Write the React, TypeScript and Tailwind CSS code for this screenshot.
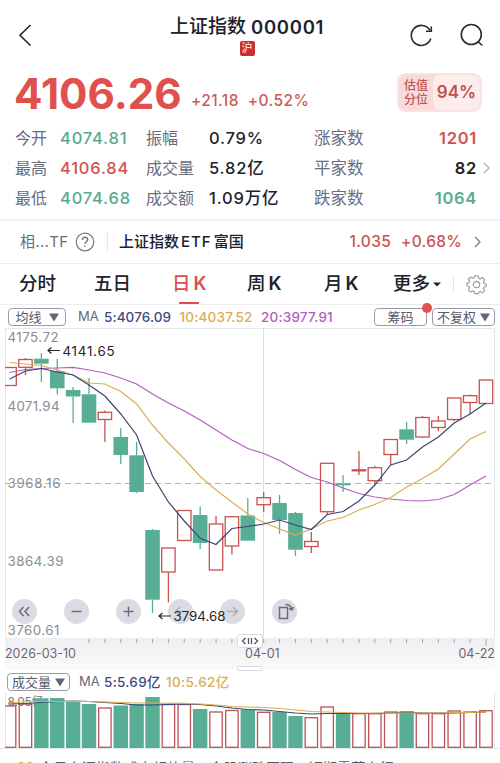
import React from "react";

const RED = "#c9514f";
const GREEN = "#57ae95";
const NAVY = "#3b4573";
const GOLD = "#dbad52";
const PURPLE = "#b45cbf";

type Candle = [up: 0 | 1, top: number, bottom: number, high: number, low: number, vol: number];

const candles: Candle[] = [
  [1, 367.5, 385.5, 367.5, 385.5, 706],
  [1, 359.5, 367.3, 358, 375, 704],
  [0, 358.7, 363.7, 353, 382, 698.3],
  [0, 371, 388.3, 359, 394.5, 698],
  [0, 390, 396.5, 387, 423, 702],
  [0, 394.3, 422.7, 378, 422.7, 704],
  [1, 412.3, 419.5, 410.5, 442, 708],
  [0, 437, 455, 428, 464, 705.5],
  [0, 455.3, 492, 442, 493, 704],
  [0, 530, 599.7, 529, 613, 697],
  [1, 548, 572, 548, 602.5, 704.5],
  [1, 510.5, 540.5, 510, 541, 704.5],
  [0, 515, 543, 506.5, 549, 709],
  [1, 524, 570, 516, 570, 712],
  [1, 516.7, 546, 516, 554.5, 710.5],
  [0, 515.5, 540.7, 498, 540.7, 709.5],
  [1, 497.7, 504.7, 492, 512, 712.3],
  [0, 503, 520, 495, 534, 712],
  [0, 513, 549.7, 512, 556, 716],
  [1, 541.5, 546.5, 532, 553, 717.7],
  [1, 463.3, 511.7, 463, 514, 707],
  [0, 483.3, 485.3, 475, 492, 713],
  [1, 469.8, 470.8, 451, 475, 713.7],
  [1, 467.7, 480.7, 466, 485, 713.7],
  [1, 439.5, 454.5, 439, 465, 712],
  [0, 429.3, 439.7, 422, 444, 711],
  [1, 417.5, 437, 416, 438, 713.7],
  [1, 421, 427.5, 416, 431, 713.7],
  [1, 398, 419.5, 398, 421, 711],
  [1, 395.7, 402.5, 394.5, 414, 712],
  [1, 380, 403.5, 380, 403.5, 710.7],
];

const ma5 = [379, 371, 368.5, 372, 375, 385, 396, 414, 435, 476, 502, 521, 538.3, 544.5, 528.5, 526.5, 524, 520, 525, 529.5, 514.5, 511.5, 501, 485, 465, 460, 447, 437, 423, 414, 403];
const ma10 = [362.5, 364, 365.5, 370, 375, 383, 384, 391.5, 404, 425, 443, 459, 476.5, 490, 502, 514, 522.5, 529, 535, 529, 521, 517.5, 510, 504.5, 497.5, 487, 478.5, 469, 454, 439, 431.5];
const ma20 = [372.5, 369.5, 368.5, 368, 367.3, 370, 373, 378, 384, 394, 403, 411, 420, 430, 440, 448.5, 453.5, 460.5, 469.5, 477.5, 482, 488, 493.5, 497, 499, 500.5, 501, 499.5, 494.5, 485, 476];
const vol5 = [704, 703.5, 702.5, 701.5, 701, 701.5, 702.5, 703.5, 705, 705, 704.5, 704, 704.5, 706, 708, 709.5, 710, 711.5, 713, 714, 713.5, 713.5, 713.5, 713.5, 713, 712.5, 713, 713, 713, 712.5, 712];
const vol10 = [702.5, 702, 701.5, 701.5, 701.3, 701.5, 702, 702.5, 703, 703, 703.3, 703.3, 704, 705, 706.5, 707, 707.5, 708.5, 710, 711.5, 712, 712.5, 713, 713, 713, 713, 713, 713, 712.5, 712.5, 712];

const cx = (i: number) => 9.6 + 15.88 * i;
const points = (ys: number[]) => ys.map((y, i) => `${cx(i).toFixed(1)},${y}`).join(" ");

function PriceChart() {
  return (
    <svg className="block" width="500" height="310" viewBox="0 328 500 310">
      <defs>
        <clipPath id="plot">
          <rect x="5" y="328" width="490" height="420" />
        </clipPath>
      </defs>
      <path d="M5.5 638V328.5H494.5V638" fill="none" stroke="#e6e7ea" />
      <path d="M263.5 328V638" stroke="#dcdde1" />
      <path d="M5 483.5H494" stroke="#b4b4b8" strokeDasharray="6 4" />
      <g fill="#8b8c91" fontSize="13.3" fontFamily="Inter">
        <text x="7.5" y="341.5" textLength="51">4175.72</text>
        <text x="7.5" y="410.5" textLength="52">4071.94</text>
        <text x="7.5" y="488" textLength="53">3968.16</text>
        <text x="7.5" y="566" textLength="56">3864.39</text>
        <text x="7.5" y="635" textLength="52">3760.61</text>
      </g>
      <g clipPath="url(#plot)">
        {candles.map(([up, t, b, h, l], i) => {
          const x = cx(i);
          const c = up ? RED : GREEN;
          return (
            <g key={i} stroke={c} strokeWidth="1.3">
              <path d={`M${x} ${h}V${t}M${x} ${b}V${l}`} />
              {up ? (
                <rect x={x - 6.7} y={t} width="13.4" height={b - t} fill="none" />
              ) : (
                <rect x={x - 7.3} y={t} width="14.6" height={b - t} fill={GREEN} stroke="none" />
              )}
            </g>
          );
        })}
        <polyline points={points(ma20)} fill="none" stroke={PURPLE} strokeWidth="1.2" />
        <polyline points={points(ma10)} fill="none" stroke={GOLD} strokeWidth="1.2" />
        <polyline points={points(ma5)} fill="none" stroke={NAVY} strokeWidth="1.2" />
      </g>
      <path d="M60 350.5H48M51.5 347.5L48 350.5L51.5 353.5" fill="none" stroke="#26272c" strokeWidth="1.2" />
      <text x="62.5" y="355.5" textLength="52" fill="#26272c" fontSize="13.3" fontFamily="Inter">4141.65</text>
    </svg>
  );
}

function VolumeChart() {
  return (
    <svg className="block" width="500" height="57" viewBox="0 692 500 57">
      <defs>
        <clipPath id="volplot">
          <rect x="5" y="692" width="490" height="57" />
        </clipPath>
      </defs>
      <path d="M5.5 692V748.5M494.5 692V748.5M0 748.5H500" stroke="#e6e7ea" />
      <g clipPath="url(#volplot)">
        <text x="7.5" y="706" textLength="36" fill="#77787e" fontSize="12" fontFamily="Inter, 'Noto Sans CJK SC', sans-serif">8.05亿</text>
        {candles.map(([up, , , , , v], i) =>
          up ? (
            <rect key={i} x={cx(i) - 6.2} y={v} width="12.4" height={747.3 - v} fill="none" stroke="#b95457" strokeWidth="1.3" />
          ) : (
            <rect key={i} x={cx(i) - 7.2} y={v} width="14.4" height={748 - v} fill={GREEN} />
          )
        )}
        <polyline points={points(vol5)} fill="none" stroke={NAVY} strokeWidth="1.2" />
        <polyline points={points(vol10)} fill="none" stroke={GOLD} strokeWidth="1.2" />
      </g>
    </svg>
  );
}

function Chevron({ className }: { className: string }) {
  return (
    <svg className={className} width="7" height="12" viewBox="0 0 7 12" fill="none" stroke="currentColor" strokeWidth="1.3">
      <path d="M1 1L6 6L1 11" />
    </svg>
  );
}

function RoundButton({ children, faded }: { children: React.ReactNode; faded?: boolean }) {
  return (
    <div className="flex size-[25px] items-center justify-center rounded-full bg-[#d5d5de]/85">
      <svg className={faded ? "opacity-40" : ""} width="25" height="25" viewBox="0 0 25 25" fill="none" stroke="#6b6c7b" strokeWidth="1.5">
        {children}
      </svg>
    </div>
  );
}

function Triangle() {
  return (
    <svg width="10" height="9" viewBox="0 0 10 9">
      <path d="M0 .5H10L5 8.5Z" fill="#62667a" />
    </svg>
  );
}

const stats = [
  ["今开", "4074.81", "text-[#5aab8e]", "振幅", "0.79%", "涨家数", "1201", "text-[#d4514f]"],
  ["最高", "4106.84", "text-[#d4514f]", "成交量", "5.82亿", "平家数", "82", "text-[#22232a]"],
  ["最低", "4074.68", "text-[#5aab8e]", "成交额", "1.09万亿", "跌家数", "1064", "text-[#5aab8e]"],
];

export default function App() {
  return (
    <div className="h-[763px] w-[500px] overflow-hidden bg-white font-['Inter','Noto_Sans_CJK_SC',sans-serif] text-[#20222b]">
      <header className="flex h-[69px] pt-[15px]">
        <svg className="mt-[9px] ml-[18px]" width="92" height="24" viewBox="0 0 92 24" fill="none" stroke="#24252b" strokeWidth="1.6">
          <path d="M12.5 1L2 11.3L12.5 21.5" />
        </svg>
        <div className="mr-auto ml-[60px] flex flex-col items-center">
          <div className="flex h-[24px] items-center gap-[5px] whitespace-nowrap font-medium leading-[24px]">
            <span className="text-[19px]">上证指数</span>
            <span className="text-[18.5px] font-semibold tracking-[0.7px]">000001</span>
          </div>
          <div className="mt-[2px] flex h-[15px] w-[15px] items-center justify-center rounded-[2px] bg-[#c9302c] text-[11px] leading-[15px] text-white">沪</div>
        </div>
        <svg className="mt-[8px] mr-[14px]" width="78" height="26" viewBox="0 0 78 26" fill="none" stroke="#2a2b31" strokeWidth="1.6">
          <path d="M21.8 7.2A10 10 0 1 0 22.8 15.5M23.3 3.5V8.3H18" />
          <circle cx="63.3" cy="11.5" r="10" />
          <path d="M70 18.5L74.3 22.5" />
        </svg>
      </header>

      <section className="flex h-[53px] pr-[18px] pl-[14px]">
        <div className="w-[167px] text-[42.2px] leading-[49px] font-bold text-[#e0504c]">4106.26</div>
        <div className="mt-[22px] ml-[10px] flex gap-[9px] text-[15.5px] leading-[20px] font-medium tracking-[0.4px] text-[#cb5b5b]">
          <span>+21.18</span>
          <span>+0.52%</span>
        </div>
        <div className="mt-[4px] ml-auto flex h-[39px] w-[85px] rounded-[9px] border-2 border-[#fae3e3] bg-[#f8dada]">
          <div className="flex w-[34px] flex-col items-center justify-center text-[12px] leading-[14px] font-medium text-[#bd5555]">
            <span>估值</span>
            <span>分位</span>
          </div>
          <div className="flex flex-1 items-center justify-center rounded-[7px] bg-[#fcecec] text-[17px] font-semibold text-[#c24e4e]">94%</div>
        </div>
      </section>

      <section className="relative h-[99px] border-b-2 border-[#f1f1f3] pt-[1px] text-[16px]">
        {stats.map(([a, av, ac, b, bv, c, cv, cc]) => (
          <div key={a} className="flex h-[30px] items-center whitespace-nowrap">
            <span className="ml-[15px] w-[45px] text-[#686d80]">{a}</span>
            <span className={`w-[86px] text-[16.5px] font-medium tracking-[0.8px] ${ac}`}>{av}</span>
            <span className="w-[63px] text-[#686d80]">{b}</span>
            <span className="w-[105px] text-[16.5px] font-medium tracking-[0.8px]">{bv}</span>
            <span className="w-[60px] text-[16.5px] text-[#686d80]">{c}</span>
            <span className={`ml-auto mr-[23px] text-[16.5px] font-semibold tracking-[0.7px] ${cc}`}>{cv}</span>
          </div>
        ))}
        <Chevron className="absolute top-[40px] right-[10px] text-[#aeb0b8]" />
      </section>

      <section className="flex h-[43px] items-center border-b border-[#ececef] whitespace-nowrap">
        <span className="ml-[20px] w-[55px] text-[15px] tracking-[0.3px] text-[#686d80]">相...TF</span>
        <svg width="20" height="20" viewBox="0 0 20 20" fill="none" stroke="#777b87" strokeWidth="1.2">
          <circle cx="10" cy="10" r="8.8" />
          <path d="M7.4 8Q7.4 5.3 10 5.3T12.6 7.7Q12.6 9 11.2 9.8Q10 10.5 10 12M10 13.4V15" strokeWidth="1.4" />
        </svg>
        <div className="ml-[12px] h-[20px] w-px bg-[#e6e6ea]" />
        <span className="ml-[11px] text-[15px] font-medium">上证指数<span className="mx-[2px] tracking-[1px]">ETF</span>富国</span>
        <span className="ml-auto text-[15.5px] font-medium tracking-[0.3px] text-[#cb5353]">1.035</span>
        <span className="ml-[10px] text-[15.5px] font-medium tracking-[0.3px] text-[#cb5353]">+0.68%</span>
        <Chevron className="mr-[19px] ml-[12px] text-[#777b87]" />
      </section>

      <nav className="flex h-[41px] items-center border-b border-[#ececef] text-[18.5px] font-medium whitespace-nowrap">
        <span className="ml-[19px] w-[75px]">分时</span>
        <span className="w-[78px]">五日</span>
        <span className="relative flex w-[75px] gap-[3px] text-[#d9504d]">
          日<b className="font-semibold">K</b>
          <i className="absolute -bottom-[6px] left-[7px] h-[2px] w-[20px] bg-[#d9504d]" />
        </span>
        <span className="flex w-[77px] gap-[3px]">周<b className="font-semibold">K</b></span>
        <span className="flex w-[69px] gap-[3px]">月<b className="font-semibold">K</b></span>
        <span>更多</span>
        <svg className="ml-[3px]" width="8" height="5" viewBox="0 0 8 5"><path d="M0 .5H8L4 4.5Z" fill="#20222b" /></svg>
        <div className="ml-[12px] h-[16px] w-px bg-[#e6e6ea]" />
        <svg className="ml-[12px]" width="21" height="21" viewBox="0 0 24 24" fill="none" stroke="#9a9ca4" strokeWidth="1.3" strokeLinejoin="round">
          <path d="M10 2h4l.6 2.9 1.6.7 2.5-1.6 2.8 2.8-1.6 2.5.7 1.6 2.4.6v2.8l-2.5.8-.6 1.5 1.4 2.4-2.5 2.5-2.6-1.4-1.6.7L14 22.5h-4l-.7-2.5-1.5-.7-2.6 1.4L2.7 18.2l1.4-2.4-.6-1.5L1 13.5v-2.8l2.5-.7.6-1.5L2.6 6l2.7-2.5 2.5 1.4 1.5-.6z" />
          <circle cx="12" cy="12" r="3.6" />
        </svg>
      </nav>

      <div className="flex h-[23px] items-center pt-[1px] text-[13.5px] whitespace-nowrap">
        <div className="ml-[8px] flex h-[18px] w-[58px] items-center justify-center gap-[7px] rounded-[4px] border border-[#9a9da9] text-[13px] leading-none text-[#555a6c]">均线<Triangle /></div>
        <span className="ml-[12px] w-[26px] text-[13px] text-[#666a78]">MA</span>
        <span className="w-[75.5px] font-medium tracking-[0.1px] text-[#3b4a80]">5:4076.09</span>
        <span className="w-[81.5px] font-medium tracking-[0.2px] text-[#dbad52]">10:4037.52</span>
        <span className="font-medium tracking-[0.2px] text-[#b45cbf]">20:3977.91</span>
        <div className="relative ml-auto flex h-[18px] w-[53px] items-center justify-center rounded-[4px] border border-[#9a9da9] text-[13px] leading-none text-[#555a6c]">
          筹码
          <i className="absolute -top-[6px] -right-[6px] size-[10px] rounded-full bg-[#e25350]" />
        </div>
        <div className="mr-[5px] ml-[5px] flex h-[18px] w-[63px] items-center justify-center gap-[4px] rounded-[4px] border border-[#9a9da9] text-[13px] leading-none text-[#555a6c]">不复权<Triangle /></div>
      </div>

      <div className="relative">
        <PriceChart />
        <div className="absolute top-[271px] left-[12px] flex gap-[27px]">
          <RoundButton><path d="M11.5 8L7.5 12.5L11.5 17M17 8L13 12.5L17 17" /></RoundButton>
          <RoundButton><path d="M7.5 12.5H17.5" /></RoundButton>
          <RoundButton><path d="M7.5 12.5H17.5M12.5 7.5V17.5" /></RoundButton>
          <RoundButton faded><path d="M18 12.5H7.5M12 8L7.5 12.5L12 17" /></RoundButton>
          <RoundButton faded><path d="M7 12.5H17.5M13 8L17.5 12.5L13 17" /></RoundButton>
          <RoundButton><path d="M7.5 8.5H15.5V19.5H7.5ZM13.5 5.5Q19 5.5 20 10.5M17 9.5L20 11L21.5 8" /></RoundButton>
        </div>
        <svg className="absolute top-[278px] left-[156px]" width="76" height="20" viewBox="0 0 76 20">
          <path d="M15 10H3M6.5 7L3 10L6.5 13" fill="none" stroke="#26272c" strokeWidth="1.2" />
          <text x="17.5" y="15" textLength="52" fill="#26272c" fontSize="13.3" fontFamily="Inter">3794.68</text>
        </svg>
      </div>

      <div className="relative ml-[5px] flex h-[32px] w-[490px] items-end bg-linear-to-b from-[#efeff1] to-[#fafafb] pb-[8px] text-[12.5px] leading-[16px] whitespace-nowrap text-[#666a75]">
        <svg className="absolute top-0 left-0" width="490" height="12" viewBox="5 0 490 12">
          {candles.map((_, i) => i > 4 && <path key={i} d={`M${cx(i)} 1V${i === 30 ? 8 : 5}`} stroke="#a5a6aa" />)}
        </svg>
        <span className="w-[240px]">2026-03-10</span>
        <span>04-01</span>
        <span className="ml-auto">04-22</span>
        <div className="absolute -top-[4px] left-[232px] flex h-[14px] w-[26px] items-center justify-center rounded-[3px] border border-[#d8d9e2] bg-white">
          <svg width="18" height="8" viewBox="0 0 18 8" fill="none" stroke="#4d5062" strokeWidth="1.3"><path d="M4.5 1L1.5 4L4.5 7M7.5 1V7M10.5 1V7M13.5 1L16.5 4L13.5 7" /></svg>
        </div>
        <div className="absolute top-[28px] left-[232px] h-[5px] w-[26px] rounded-[2px] border border-[#d8d9e2] bg-white" />
      </div>

      <div className="flex h-[22px] items-center pt-[2px] text-[13.5px] whitespace-nowrap">
        <div className="ml-[7px] flex h-[18px] w-[63px] items-center justify-center gap-[4px] rounded-[4px] border border-[#9a9da9] text-[13px] leading-none text-[#555a6c]">成交量<Triangle /></div>
        <span className="ml-[9px] w-[25px] text-[13px] text-[#666a78]">MA</span>
        <span className="w-[62px] font-medium tracking-[0.3px] text-[#3b4a80]">5:5.69亿</span>
        <span className="font-medium tracking-[0.4px] text-[#dbad52]">10:5.62亿</span>
      </div>
      <VolumeChart />
      <footer className="flex items-start pt-[9px] text-[14.2px] leading-[20px] whitespace-nowrap text-[#555a6c]">
        <span className="ml-[17px] w-[22px] text-[13px] leading-[18px] font-bold text-[#dbad52]">88</span>
        <span>今日上证指数成交额放量，个股涨跌互现，短期震荡上行</span>
      </footer>
    </div>
  );
}
